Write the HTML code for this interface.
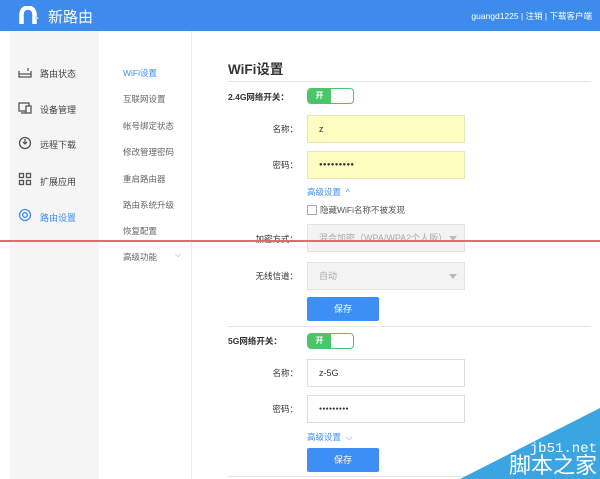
<!DOCTYPE html>
<html><head><meta charset="utf-8"><style>
*{margin:0;padding:0;box-sizing:border-box}
body{width:600px;height:479px;overflow:hidden;position:relative;background:#fff;font-family:"Liberation Sans","Noto Sans CJK SC",sans-serif;color:#333}
.a{position:absolute}
.hd{left:0;top:0;width:600px;height:31px;background:#3d8ceb}
.side{left:10px;top:31px;width:89px;height:448px;background:#f5f5f5}
.sub{left:191px;top:31px;width:1px;height:448px;background:#ececec}
.si{font-size:9px;color:#444;left:40px}
.sm{font-size:8.5px;color:#666;left:123px}
.lb{font-size:8.5px;color:#333;width:70px;text-align:right;left:228px}
.in{left:307px;width:158px;height:28px;border:1px solid #ddd;font-size:9px;padding-left:11px;line-height:26px}
.y{background:#fdfec0;border-color:#e6e6b8}
.sel{background:#f3f3f3;color:#aaa;border-color:#e2e2e2}
.sel:after{content:"";position:absolute;right:7px;top:11px;border:4px solid transparent;border-top:5px solid #bbb}
.tg{left:307px;width:47px;height:16px;border:1px solid #4cc46a;border-radius:4px;background:#fff;overflow:hidden}
.tg span{display:block;width:23px;height:14px;background:#4cc46a;color:#fff;font-size:8px;font-weight:bold;text-align:center;line-height:14px}
.btn{left:307px;width:72px;height:24px;background:#3d8ff5;color:#fff;font-size:9px;text-align:center;line-height:24px;border-radius:2px}
.hr{left:227px;width:364px;height:1px;background:#e6e6e6}
.lk{left:307px;font-size:8.5px;color:#3d8ff5}
.dots{font-size:6px;letter-spacing:0.3px;font-weight:bold}
</style></head><body>
<div class="a hd"></div>
<svg class="a" style="left:19px;top:6px" width="22" height="19" viewBox="0 0 22 19"><path d="M2.5 18V8a6.5 6.5 0 0 1 13 0v10" fill="none" stroke="#fff" stroke-width="4.5"/><path d="M16 10l4 2-4 2z" fill="#cfe3fb"/></svg>
<div class="a" style="left:48px;top:6px;font-size:15px;color:#fff">新路由</div>
<div class="a" style="right:8px;top:10px;font-size:8.5px;color:#fff">guangd1225 | 注销 | 下载客户端</div>
<div class="a side"></div>
<div class="a sub"></div>
<svg class="a" style="left:18px;top:66px" width="14" height="160" viewBox="0 0 14 160" fill="none" stroke="#555" stroke-width="1.3">
<path d="M1 5v6h12V5M1 8h12M10 2v3"/>
<rect x="1" y="37" width="10" height="8"/><rect x="8" y="40" width="5" height="7" fill="#f5f5f5"/><path d="M3 47h5"/>
<circle cx="7" cy="77" r="5.5"/><path d="M7 73v5M5 76l2 2 2-2"/>
<rect x="1.5" y="107.5" width="4" height="4"/><rect x="8.5" y="107.5" width="4" height="4"/><rect x="1.5" y="114.5" width="4" height="4"/><rect x="8.5" y="114.5" width="4" height="4"/>
<circle cx="7" cy="149" r="5.5" stroke="#3d8ff5"/><circle cx="7" cy="149" r="2.3" stroke="#3d8ff5"/>
</svg>
<div class="a si" style="top:67px">路由状态</div>
<div class="a si" style="top:103px">设备管理</div>
<div class="a si" style="top:138px">远程下载</div>
<div class="a si" style="top:175px">扩展应用</div>
<div class="a si" style="top:211px;color:#3d8ff5">路由设置</div>
<div class="a sm" style="top:67px;color:#3d8ff5">WiFi设置</div>
<div class="a sm" style="top:93px">互联网设置</div>
<div class="a sm" style="top:120px">帐号绑定状态</div>
<div class="a sm" style="top:146px">修改管理密码</div>
<div class="a sm" style="top:173px">重启路由器</div>
<div class="a sm" style="top:199px">路由系统升级</div>
<div class="a sm" style="top:225px">恢复配置</div>
<div class="a sm" style="top:251px">高级功能</div>
<div class="a" style="left:175px;top:250px;font-size:8px;color:#999">⌵</div>

<div class="a" style="left:228px;top:58px;font-size:13.5px;font-weight:bold;color:#333">WiFi设置</div>
<div class="a hr" style="top:81px"></div>
<div class="a" style="left:228px;top:91px;font-size:8.5px;font-weight:bold">2.4G网络开关：</div>
<div class="a tg" style="top:88px"><span>开</span></div>
<div class="a lb" style="top:123px">名称：</div>
<div class="a in y" style="top:115px">z</div>
<div class="a lb" style="top:159px">密码：</div>
<div class="a in y dots" style="top:151px">●●●●●●●●●</div>
<div class="a lk" style="top:186px">高级设置 &nbsp;^</div>
<div class="a" style="left:307px;top:205px;width:10px;height:10px;border:1px solid #aaa;background:#fff"></div>
<div class="a" style="left:320px;top:204px;font-size:8.5px;color:#555">隐藏WiFi名称不被发现</div>
<div class="a lb" style="top:233px">加密方式：</div>
<div class="a in sel" style="top:224px">混合加密（WPA/WPA2个人版）</div>
<div class="a lb" style="top:270px">无线信道：</div>
<div class="a in sel" style="top:262px">自动</div>
<div class="a btn" style="top:297px">保存</div>
<div class="a hr" style="top:326px"></div>
<div class="a" style="left:228px;top:335px;font-size:8.5px;font-weight:bold">5G网络开关：</div>
<div class="a tg" style="top:333px"><span>开</span></div>
<div class="a lb" style="top:367px">名称：</div>
<div class="a in" style="top:359px">z-5G</div>
<div class="a lb" style="top:403px">密码：</div>
<div class="a in" style="top:395px;font-size:5px;letter-spacing:0.3px">●●●●●●●●●</div>
<div class="a lk" style="top:431px">高级设置 &nbsp;⌵</div>
<div class="a btn" style="top:448px">保存</div>
<div class="a hr" style="top:476px"></div>

<div class="a" style="left:0;top:240px;width:600px;height:2px;background:#de6a72"></div>
<svg class="a" style="left:0;top:0" width="600" height="479"><polygon points="600,408 600,479 460,479" fill="#3aa5e0"/></svg>
<div class="a" style="right:3px;top:441px;font-family:'Liberation Mono',monospace;font-size:14px;color:#fff">jb51.net</div>
<div class="a" style="right:3px;top:453px;font-size:22px;color:#fff;line-height:26px">脚本之家</div>
</body></html>
